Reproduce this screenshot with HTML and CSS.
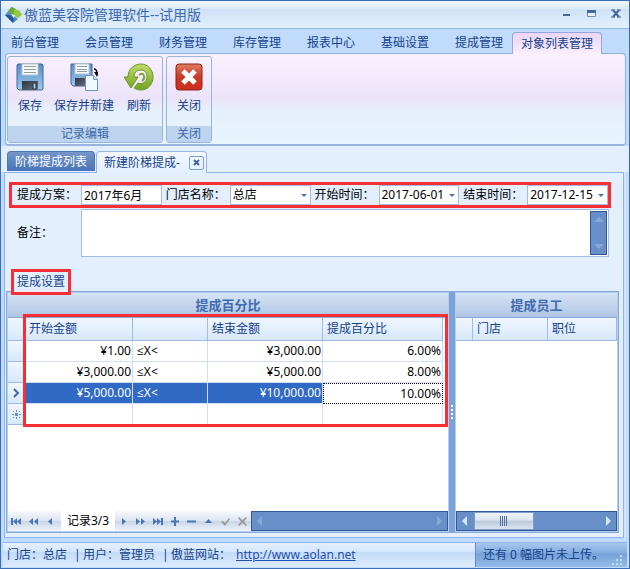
FILE: index.html
```html
<!DOCTYPE html>
<html lang="zh-CN">
<head>
    <meta charset="UTF-8">
    <meta name="viewport" content="width=device-width, initial-scale=1.0">
    <title>傲蓝美容院管理软件--试用版</title>
    <link rel="stylesheet" href="styles.css">
</head>
<body>
    <div class="window">
        <header class="titlebar">
            <svg class="logo" width="18" height="18" viewBox="0 0 18 18">
                <path d="M5 3 L10 6 L9 10 L13 13 L8 17 L0 9 Z" fill="#4a8ad0"/>
                <path d="M0 9 L5 9 L9 13 L8 17 Z" fill="#28588f"/>
                <path d="M6 1 Q11 1 12 7 L9 10 L4 7 Q4 3 6 1 Z" fill="#6fa832"/>
                <path d="M9 4 Q15 3 17 9 L13 12 L9 10 Z" fill="#93c83c"/>
                <path d="M6 8 L10 9 L9 12 Z" fill="#e4f3ff"/>
            </svg>
            <h1>傲蓝美容院管理软件--试用版</h1>
            <div class="window-buttons">
                <button aria-label="最小化"><svg width="12" height="12" viewBox="0 0 12 12"><path d="M3 6h7v2H3z" fill="#44689c"/></svg></button>
                <button aria-label="最大化"><svg width="12" height="12" viewBox="0 0 12 12"><path d="M2.5 2.5h8v6h-8z" fill="#e9f1fb" stroke="#6f8db8"/><path d="M2 2h9v3H2z" fill="#44689c"/></svg></button>
                <button aria-label="关闭窗口"><svg width="12" height="12" viewBox="0 0 12 12"><path d="M3 2l6 7M9 2l-6 7" stroke="#44689c" stroke-width="2"/><path d="M1 2h4M7 2h4M1 9h4M7 9h4" stroke="#44689c"/></svg></button>
            </div>
        </header>

        <nav class="menu">
            <button>前台管理</button>
            <button>会员管理</button>
            <button>财务管理</button>
            <button>库存管理</button>
            <button>报表中心</button>
            <button>基础设置</button>
            <button>提成管理</button>
            <button class="active">对象列表管理</button>
        </nav>

        <div class="ribbon">
            <div class="ribbon-group">
                <div class="ribbon-items">
                    <button class="tool">
                        <svg width="28" height="28" viewBox="0 0 28 28">
                            <defs>
                                <linearGradient id="disk" x1="0" y1="0" x2="0" y2="1"><stop offset="0" stop-color="#5b8cc4"/><stop offset="1" stop-color="#9cc8f2"/></linearGradient>
                                <linearGradient id="shutter" x1="0" y1="0" x2="1" y2="1"><stop offset="0" stop-color="#2c3440"/><stop offset="1" stop-color="#66717f"/></linearGradient>
                            </defs>
                            <path d="M2 1h24l1 1v24l-1 1H3l-2-2V2z" fill="url(#disk)" stroke="#41699a"/>
                            <path d="M6 1h16v11H6z" fill="#f7f9fa" stroke="#b6c6d5"/>
                            <path d="M8 3.5h12M8 6.500h12M8 9.500h12" stroke="#8f9d96"/>
                            <path d="M6 18h16v9H6z" fill="url(#shutter)"/>
                            <path d="M17 20h3v6h-3z" fill="#9fcbf2" stroke="#27303b"/>
                        </svg>
                        <span>保存</span>
                    </button>
                    <button class="tool">
                        <svg width="28" height="28" viewBox="0 0 28 28">
                            <path d="M1 1h21v22H3l-2-2z" fill="url(#disk)" stroke="#41699a"/>
                            <path d="M5 1h14v10H5z" fill="#f7f9fa" stroke="#b6c6d5"/>
                            <path d="M7 3.500h10M7 6.500h10M7 8.500h10" stroke="#8f9d96"/>
                            <path d="M5 15h11v8H5z" fill="url(#shutter)"/>
                            <path d="M15.500 12.500h8l4 4v11h-12z" fill="#f2f8ff" stroke="#6d94c2"/>
                            <path d="M23.500 12.500v4h4" fill="#cfe0f4" stroke="#6d94c2"/>
                            <path d="M24 6q3 0 3 5" fill="none" stroke="#111" stroke-width="1.500"/>
                            <path d="M24 9h5l-2 5z" fill="#111"/>
                        </svg>
                        <span>保存并新建</span>
                    </button>
                    <button class="tool">
                        <svg width="30" height="28" viewBox="0 0 30 28">
                            <defs>
                                <linearGradient id="leaf" x1="0" y1="0" x2="0" y2="1"><stop offset="0" stop-color="#c1d96a"/><stop offset="1" stop-color="#6fa51d"/></linearGradient>
                            </defs>
                            <path d="M4 14C4 6 10 1 17 1C24 1 29 7 29 14C29 22 23 27 17 27C14 27 12 26 10 25L14 20C18 22 23 19 23 14C23 9 20 7 17 7C12 7 10 10 10 14L14 14L7 25L0 14Z" fill="url(#leaf)" stroke="#6a9527"/>
                            <path d="M15 12q4-3 5 1q1 3-2 5" fill="none" stroke="#7ba533" stroke-width="2"/>
                        </svg>
                        <span>刷新</span>
                    </button>
                </div>
                <div class="ribbon-caption">记录编辑</div>
            </div>
            <div class="ribbon-group">
                <div class="ribbon-items">
                    <button class="tool">
                        <svg width="28" height="28" viewBox="0 0 28 28">
                            <defs>
                                <linearGradient id="red" x1="0" y1="0" x2="0" y2="1"><stop offset="0" stop-color="#e07a62"/><stop offset=".5" stop-color="#c93a28"/><stop offset="1" stop-color="#cf2d1e"/></linearGradient>
                            </defs>
                            <rect x="1" y="1" width="26" height="26" rx="3" fill="url(#red)" stroke="#8d2419"/>
                            <path d="M8 8l12 12M20 8L8 20" stroke="#fff" stroke-width="5"/>
                        </svg>
                        <span>关闭</span>
                    </button>
                </div>
                <div class="ribbon-caption">关闭</div>
            </div>
        </div>

        <div class="doc-tabs">
            <button class="doc-tab">阶梯提成列表</button>
            <div class="doc-tab current">
                <span>新建阶梯提成-</span>
                <button class="tab-close" aria-label="关闭标签"><svg width="9" height="9" viewBox="0 0 9 9"><path d="M2 2l5 5M7 2l-5 5" stroke="#40669f" stroke-width="2"/></svg></button>
            </div>
        </div>

        <main class="document">
            <form class="plan-form">
                <div class="fields">
                    <div class="field">
                        <label for="plan">提成方案：</label>
                        <input id="plan" type="text" value="2017年6月">
                    </div>
                    <div class="field dropdown">
                        <label for="shop">门店名称：</label>
                        <select id="shop"><option>总店</option></select>
                    </div>
                    <div class="field dropdown">
                        <label for="start">开始时间：</label>
                        <select id="start"><option>2017-06-01</option></select>
                    </div>
                    <div class="field dropdown">
                        <label for="end">结束时间：</label>
                        <select id="end"><option>2017-12-15</option></select>
                    </div>
                </div>
                <div class="remark">
                    <label for="remark">备注：</label>
                    <div class="remark-box">
                        <textarea id="remark"></textarea>
                        <div class="v-scroll"><i class="up"></i><i class="down"></i></div>
                    </div>
                </div>
            </form>

            <button class="section-tab">提成设置</button>

            <div class="panes">
                <section class="pane">
                    <h2>提成百分比</h2>
                    <div class="grid-wrap">
                        <table class="rates">
                            <colgroup>
                                <col class="c-mark"><col class="c-from"><col class="c-sign"><col class="c-to"><col>
                            </colgroup>
                            <thead>
                                <tr><th></th><th>开始金额</th><th></th><th>结束金额</th><th>提成百分比</th></tr>
                            </thead>
                            <tbody>
                                <tr><th></th><td class="num">¥1.00</td><td>≤X&lt;</td><td class="num">¥3,000.00</td><td class="num">6.00%</td></tr>
                                <tr><th></th><td class="num">¥3,000.00</td><td>≤X&lt;</td><td class="num">¥5,000.00</td><td class="num">8.00%</td></tr>
                                <tr class="selected"><th><svg width="8" height="10" viewBox="0 0 8 10"><path d="M2 1l4 4-4 4" fill="none" stroke="#44689c" stroke-width="2"/></svg></th><td class="num">¥5,000.00</td><td>≤X&lt;</td><td class="num">¥10,000.00</td><td class="num focus">10.00%</td></tr>
                                <tr><th><svg width="9" height="9" viewBox="0 0 9 9"><path d="M4 0h1v2H4zM4 7h1v2H4zM0 4h2v1H0zM7 4h2v1H7zM3 3h3v3H3zM1 1h1v1H1zM7 1h1v1H7zM1 7h1v1H1zM7 7h1v1H7z" fill="#6d8fbd"/></svg></th><td></td><td></td><td></td><td></td></tr>
                            </tbody>
                        </table>
                        <div class="highlight"></div>
                    </div>
                    <div class="navigator">
                        <button aria-label="首条"><svg width="11" height="9" viewBox="0 0 11 9"><path d="M0 1h2v7H0zM6 1v7L2 4.500zM10 1v7L6 4.500z"/></svg></button>
                        <button aria-label="上一页"><svg width="11" height="9" viewBox="0 0 11 9"><path d="M5 1v7L1 4.500zM10 1v7L6 4.500z"/></svg></button>
                        <button aria-label="上一条"><svg width="11" height="9" viewBox="0 0 11 9"><path d="M7 1v7L3 4.500z"/></svg></button>
                        <span class="record">记录3/3</span>
                        <button aria-label="下一条"><svg width="11" height="9" viewBox="0 0 11 9"><path d="M4 1v7l4-3.500z"/></svg></button>
                        <button aria-label="下一页"><svg width="11" height="9" viewBox="0 0 11 9"><path d="M1 1v7l4-3.500zM6 1v7l4-3.500z"/></svg></button>
                        <button aria-label="末条"><svg width="11" height="9" viewBox="0 0 11 9"><path d="M1 1v7l4-3.500zM5 1v7l4-3.500zM9 1h2v7H9z"/></svg></button>
                        <button aria-label="新增"><svg width="11" height="9" viewBox="0 0 11 9"><path d="M5 0h2v3.500h3v2H7V9H5V5.500H2v-2h3z"/></svg></button>
                        <button aria-label="删除"><svg width="11" height="9" viewBox="0 0 11 9"><path d="M1 3.500h9v2H1z"/></svg></button>
                        <button aria-label="编辑"><svg width="11" height="9" viewBox="0 0 11 9"><path d="M2 6h7L5.500 2z"/></svg></button>
                        <button aria-label="确认" disabled><svg width="11" height="9" viewBox="0 0 11 9"><path d="M1 5l2-1 2 2 4-5 1 1-5 7z"/></svg></button>
                        <button aria-label="取消" disabled><svg width="11" height="9" viewBox="0 0 11 9"><path d="M2 0l3.500 3L9 0l1 1-3 3.500L10 8 9 9 5.500 6 2 9 1 8l3-3.500L1 1z"/></svg></button>
                        <div class="h-scroll idle"><i class="left"></i><i class="right"></i></div>
                    </div>
                </section>
                <div class="splitter"><svg width="4" height="16" viewBox="0 0 4 16"><path d="M1 1h2v2H1zM1 5h2v2H1zM1 9h2v2H1zM1 13h2v2H1z" fill="#fff"/></svg></div>
                <section class="pane">
                    <h2>提成员工</h2>
                    <table class="staff">
                        <colgroup><col class="c-mark"><col class="c-sign"><col></colgroup>
                        <thead>
                            <tr><th></th><th>门店</th><th>职位</th></tr>
                        </thead>
                    </table>
                    <div class="navigator">
                        <div class="h-scroll"><i class="left"></i><div class="thumb"><svg width="8" height="10" viewBox="0 0 8 10"><path d="M.5 0v10M2.500 0v10M4.500 0v10M6.500 0v10" stroke="#54719c"/></svg></div><i class="right"></i></div>
                    </div>
                </section>
            </div>
        </main>

        <footer class="status">
            <div class="status-left">
                <span>门店：总店</span>
                <span class="bar">|</span>
                <span>用户：管理员</span>
                <span class="bar">|</span>
                <span>傲蓝网站：</span>
                <a href="http://www.aolan.net">http://www.aolan.net</a>
            </div>
            <div class="status-right">
                <span>还有 0 幅图片未上传。</span>
                <svg width="12" height="12" viewBox="0 0 12 12"><path d="M8 0h2v2H8zM4 4h2v2H4zM8 4h2v2H8zM0 8h2v2H0zM4 8h2v2H4zM8 8h2v2H8z" fill="#c3daf5"/></svg>
            </div>
        </footer>
    </div>
</body>
</html>
```

FILE: styles.css
```css
* {
    box-sizing: border-box;
}

body {
    margin: 0;
    font-family: "Noto Sans", "Open Sans", "Noto Sans CJK SC", sans-serif;
    font-size: 12px;
    line-height: 16px;
    color: #000;
}

button,
input,
select,
textarea {
    font: inherit;
    color: inherit;
    margin: 0;
    padding: 0;
    border: none;
    border-radius: 0;
    background: none;
    outline: none;
}

svg {
    display: block;
    flex: none;
}

.window {
    display: flex;
    flex-direction: column;
    min-height: 100vh;
    border: 1px solid #3b6eb8;
    background: #c0dbfc;
}

/* title bar */
.titlebar {
    display: flex;
    align-items: center;
    height: 27px;
    padding: 0 1px 0 4px;
    background: linear-gradient(#eff6fe, #dcebfa 28%, #cfe2f6 32%, #e3f0fd);
}

h1 {
    margin: 0 0 0 1px;
    font-size: 14px;
    font-weight: normal;
    color: #3c68ae;
}

.window-buttons {
    display: flex;
    gap: 1px;
    margin-left: auto;
}

.window-buttons button {
    width: 24px;
    height: 20px;
    padding: 3px 6px 5px;
}

/* main menu */
.menu {
    display: flex;
    gap: 8px;
    height: 25px;
    padding: 3px 1px 0;
    border-top: 1px solid #8fb7e6;
}

.menu button {
    padding: 1px 9px 0;
    color: #15428b;
    white-space: nowrap;
}

.menu .active {
    position: relative;
    z-index: 1;
    height: 22px;
    margin-left: -8px;
    border: 1px solid #93a9dc;
    border-bottom: none;
    border-radius: 4px 4px 0 0;
    padding: 0 8px;
    background: linear-gradient(#ead6f4, #faeefc);
}

/* ribbon */
.ribbon {
    display: flex;
    gap: 3px;
    height: 93px;
    margin: 0 3px 0 4px;
    padding: 2px 2px 1px 1px;
    border: 1px solid #8cb0e2;
    border-bottom: 2px solid #9bb4df;
    border-radius: 4px;
    background: linear-gradient(#faf0fd, #ebe3f9 50%, #e6effb 62%, #e8f5fd);
}

.ribbon-group {
    display: flex;
    flex-direction: column;
    border: 1px solid #94b7e0;
    border-radius: 3px;
}

.ribbon-items {
    display: flex;
    flex: 1;
    gap: 10px;
    padding: 6px 8px 0;
}

.tool {
    display: flex;
    flex-direction: column;
    align-items: center;
    gap: 7px;
    min-width: 28px;
    color: #15428b;
    white-space: nowrap;
}

.ribbon-caption {
    height: 16px;
    line-height: 16px;
    text-align: center;
    color: #3e6aaa;
    background: #bdd3ee;
}

/* document tabs */
.doc-tabs {
    display: flex;
    gap: 1px;
    height: 26px;
    padding: 5px 6px 0;
    background: #e3efff;
}

.doc-tab {
    height: 20px;
    padding: 0 7px;
    border: 1px solid #4c78b8;
    border-bottom: none;
    border-radius: 4px 4px 0 0;
    color: #fff;
    background: linear-gradient(#7596c8, #4674b8);
    white-space: nowrap;
}

.doc-tab.current {
    position: relative;
    display: flex;
    align-items: center;
    gap: 9px;
    height: 22px;
    padding: 0 2px 0 7px;
    border-color: #94b7e6;
    color: #15428b;
    background: linear-gradient(#f4f8fe, #e3efff);
}

.tab-close {
    display: flex;
    align-items: center;
    justify-content: center;
    width: 15px;
    height: 14px;
    border: 1px solid #7ba1d8;
    border-radius: 2px;
}

/* document body */
.document {
    display: flex;
    flex: 1;
    flex-direction: column;
    margin: 0 5px 0 3px;
    padding: 9px 4px 4px 1px;
    border: 1px solid #8fb4e8;
    background: #e3efff;
    box-shadow: 2px 0 #d3e4fa;
}

.plan-form {
    padding: 0 8px 0 3px;
}

.fields {
    display: flex;
    gap: 4px;
    height: 26px;
    padding: 0 0 0 5px;
    border: 3px solid #f52f33;
}

.field {
    position: relative;
    display: flex;
    flex: 1;
    align-items: center;
    min-width: 0;
}

.field label,
.remark label {
    flex: none;
    width: 64px;
    white-space: nowrap;
}

.field input,
.field select {
    flex: 1;
    width: 0;
    height: 20px;
    padding: 0 2px;
    border: 1px solid #a3bce3;
    background: #fff;
    appearance: none;
}

.field select {
    padding-right: 12px;
}

.dropdown::after {
    content: "";
    position: absolute;
    top: 9px;
    right: 4px;
    border: 3px solid transparent;
    border-top-color: #4a75b5;
    border-bottom: none;
}

.remark {
    display: flex;
    align-items: center;
    margin-top: 1px;
    padding: 0 2px 0 8px;
}

.remark-box {
    display: flex;
    flex: 1;
    height: 48px;
    padding: 1px;
    border: 1px solid #a3bce3;
    background: #fff;
}

textarea {
    flex: 1;
    resize: none;
}

/* scroll bars */
.v-scroll {
    display: flex;
    flex-direction: column;
    justify-content: space-between;
    align-items: center;
    width: 17px;
    padding: 5px 0;
    border: 1px solid #31599a;
    background: #6890c8;
}

.h-scroll {
    display: flex;
    flex: 1;
    align-items: center;
    height: 20px;
    padding: 0 5px;
    border: 1px solid #31599a;
    background: #6890c8;
}

.up,
.down,
.left,
.right {
    border: 5px solid transparent;
}

.up {
    border-top: none;
    border-bottom-color: #86a9d8;
}

.down {
    border-bottom: none;
    border-top-color: #86a9d8;
}

.left {
    border-left: none;
    border-right-color: #d6e6fa;
}

.right {
    margin-left: auto;
    border-right: none;
    border-left-color: #d6e6fa;
}

.idle .left {
    border-right-color: #86a9d8;
}

.idle .right {
    border-left-color: #86a9d8;
}

.thumb {
    display: flex;
    align-items: center;
    justify-content: center;
    width: 60px;
    height: 18px;
    margin-left: 7px;
    border: 1px solid #7f9dcb;
    background: linear-gradient(#eef3f9, #dbe4ee 45%, #bccadb 50%, #d8e4f0);
}

/* settings section */
.section-tab {
    position: relative;
    z-index: 1;
    align-self: flex-start;
    height: 26px;
    margin: 12px 0 -4px 5px;
    padding: 0 3px;
    border: 3px solid #f52f33;
    color: #15428b;
    background: #e3efff;
}

.panes {
    display: grid;
    flex: 1;
    grid-template-columns: 442fr 6px 163fr;
    border: 1px solid #86a9dc;
    background: #fff;
}

.pane {
    display: flex;
    flex-direction: column;
    min-width: 0;
    border: 1px solid #b5cdf0;
}

h2 {
    height: 25px;
    margin: 0;
    border-bottom: 1px solid #86a9dc;
    font-size: 13px;
    line-height: 24px;
    text-align: center;
    color: #3f6cb2;
    background: linear-gradient(#d5e3f5, #b0c5e3);
}

.splitter {
    display: flex;
    align-items: center;
    justify-content: center;
    background: #7ba3da;
}

.grid-wrap {
    position: relative;
    padding-right: 5px;
}

.highlight {
    position: absolute;
    top: -4px;
    right: 0;
    bottom: -2px;
    left: 15px;
    border: 3px solid #f52f33;
    pointer-events: none;
}

table {
    width: 100%;
    table-layout: fixed;
    border-collapse: separate;
    border-spacing: 0;
}

.c-mark {
    width: 17px;
}

.c-from {
    width: 108px;
}

.c-sign {
    width: 75px;
}

.c-to {
    width: 115px;
}

th,
td {
    height: 21px;
    padding: 0 1px 0 4px;
    border-right: 1px solid #d0def2;
    border-bottom: 1px solid #d0def2;
    white-space: nowrap;
}

th {
    padding: 0 4px;
    border-color: #9dbce8;
    font-weight: normal;
    text-align: left;
    color: #15428b;
    background: linear-gradient(#f0f7ff, #d6e8fb);
}

thead th {
    height: 23px;
}

.num {
    text-align: right;
}

.selected td {
    color: #fff;
    background: #316ac5;
}

.selected .focus {
    border: 1px dotted #000;
    color: #000;
    background: #fff;
}

/* record navigator */
.navigator {
    display: flex;
    height: 20px;
    margin-top: auto;
    background: linear-gradient(#f6f9fd, #dde5f0 48%, #c9d5e6 52%, #eff4fa);
}

.navigator button {
    display: flex;
    align-items: center;
    justify-content: center;
    width: 17px;
    fill: #4677b8;
}

.navigator button:disabled {
    fill: #9b9b9b;
}

.record {
    width: 54px;
    margin-left: 2px;
    line-height: 20px;
    text-align: center;
    background: #fff;
}

/* status bar */
.status {
    display: flex;
    height: 25px;
    margin: 4px 2px 1px;
    border-top: 1px solid #8fb4e8;
    line-height: 24px;
    color: #15428b;
    background: linear-gradient(#e5f0fe, #d5e6fb 35%, #c3dbf8 40%, #dcebfd);
    white-space: nowrap;
}

.status-left {
    display: flex;
    flex: 1;
    padding-left: 4px;
}

.bar {
    width: 16px;
    padding-left: 7px;
}

.status-left a {
    margin-left: 5px;
    color: #1f4fb0;
}

.status-right {
    display: flex;
    align-items: flex-end;
    gap: 8px;
    padding: 0 3px 0 7px;
    border-left: 1px solid #5f8dcc;
    background: linear-gradient(#a6c6ee, #86aee0 40%, #76a2da 45%, #94bbea);
}
```
